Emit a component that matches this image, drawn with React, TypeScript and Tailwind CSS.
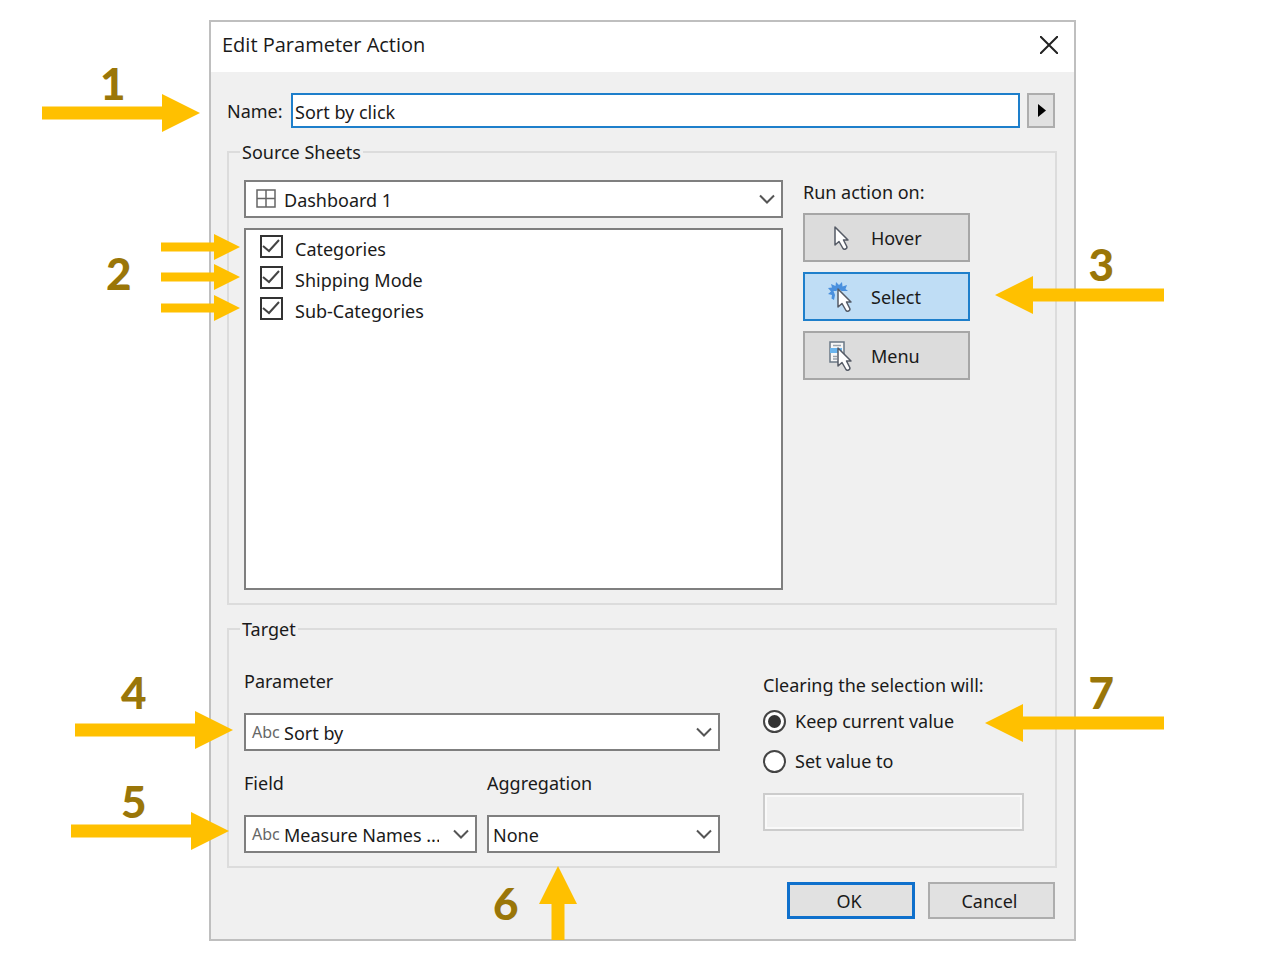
import { useState } from 'react'
import type { ReactNode } from 'react'

type Trigger = 'Hover' | 'Select' | 'Menu'

const SHEETS = ['Categories', 'Shipping Mode', 'Sub-Categories']

const CURSOR = 'M0 0v18l4-3.500 4 7c1 1.600 4.600.4 3.800-2L8.500 13H13z'

function TriggerIcon({ trigger }: { trigger: Trigger }) {
  return (
    <svg className="h-8 w-7 shrink-0" viewBox="0 0 28 32" fill="none" aria-hidden="true">
      {trigger === 'Select' && (
        <>
          <path
            d="M9 1l3 3 3-3 .5 4.500L20 4l-1.500 4 2.500 2H6.500L8 14l-1 5-2.500-1.500L5 14l-4-1 3-2.500L1 7l4-.5L4 3l4.500 2z"
            fill="#4a90de"
          />
          <path d="M8.500 11l2-2.500 3 .5 2 2-3 3h-3z" fill="#bfddf5" />
        </>
      )}
      {trigger === 'Menu' && (
        <>
          <path d="M3 2h14v20H3z" fill="#f7f7f7" stroke="#6b7885" strokeWidth="1.500" />
          <path d="M3 8h12v5H3z" fill="#6bb5ee" />
          <path d="M6 5.500h8M6 16.500h4M6 19h4" stroke="#9aa3ac" strokeWidth="1.500" />
        </>
      )}
      <path
        d={CURSOR}
        transform={trigger === 'Hover' ? 'translate(8 5)' : 'translate(11 8)'}
        fill="#fff"
        stroke="#555b66"
        strokeWidth="1.500"
        strokeLinejoin="round"
      />
    </svg>
  )
}

interface DropdownProps {
  id: string
  label?: string
  options: string[]
  icon?: ReactNode
}

function Dropdown({ id, label, options, icon }: DropdownProps) {
  return (
    <div className="relative flex h-[38px] items-center border-2 border-[#7f7f7f] bg-white">
      {icon}
      <select id={id} aria-label={label} className="h-full min-w-0 flex-1 appearance-none bg-transparent pt-0.5 pr-9 pl-1 outline-none">
        {options.map((option) => (
          <option key={option}>{option}</option>
        ))}
      </select>
      <svg className="pointer-events-none absolute right-1.5 h-4 w-4" viewBox="0 0 16 16" fill="none" stroke="#555" strokeWidth="2" aria-hidden="true">
        <path d="M1 4.500l7 7 7-7" />
      </svg>
    </div>
  )
}

function AbcIcon() {
  return <span className="w-[34px] shrink-0 pl-1.5 text-base text-[#666]">Abc</span>
}

function Group({ title, children }: { title: string; children: ReactNode }) {
  return (
    <fieldset className="mt-3 min-w-0 border-2 border-[#dcdcdc] pb-[13px] pl-[15px]">
      <legend className="-ml-1 px-0.5">{title}</legend>
      {children}
    </fieldset>
  )
}

function Arrow({ length, small = false, className }: { length: number; small?: boolean; className: string }) {
  const height = small ? 26 : 38
  const shaft = small ? 9 : 13
  const top = (height - shaft) / 2
  const neck = length - height
  return (
    <svg className={`absolute ${className}`} width={length} height={height} fill="#ffc000" aria-hidden="true">
      <path d={`M0 ${top}H${neck}V0L${length} ${height / 2}L${neck} ${height}V${top + shaft}H0z`} />
    </svg>
  )
}

function Step({ n, className }: { n: number; className: string }) {
  return (
    <span className={`absolute font-[Lato,sans-serif] text-[44px] leading-[44px] font-black text-[#9a7608] ${className}`}>
      {n}
    </span>
  )
}

function Callouts() {
  return (
    <div className="pointer-events-none absolute inset-0">
      <Step n={1} className="top-[61px] left-[100px]" />
      <Arrow length={158} className="top-[94px] left-[42px]" />
      <Step n={2} className="top-[251px] left-[106px]" />
      <Arrow small length={79} className="top-[234px] left-[161px]" />
      <Arrow small length={79} className="top-[264px] left-[161px]" />
      <Arrow small length={79} className="top-[295px] left-[161px]" />
      <Step n={3} className="top-[242px] right-[152px]" />
      <Arrow length={169} className="top-[276px] right-[102px] rotate-180" />
      <Step n={4} className="top-[670px] left-[121px]" />
      <Arrow length={158} className="top-[711px] left-[75px]" />
      <Step n={5} className="top-[779px] left-[121px]" />
      <Arrow length={158} className="top-[812px] left-[71px]" />
      <Step n={6} className="top-[881px] left-[493px]" />
      <Arrow length={74} className="top-[884px] left-[521px] -rotate-90" />
      <Step n={7} className="top-[670px] right-[152px]" />
      <Arrow length={179} className="top-[704px] right-[102px] rotate-180" />
    </div>
  )
}

export default function App() {
  const [name, setName] = useState('Sort by click')
  const [trigger, setTrigger] = useState<Trigger>('Select')
  const [clearing, setClearing] = useState('keep')

  return (
    <main className="relative min-h-screen bg-white pt-5 pr-[190px] pb-6 pl-[209px] font-['Noto_Sans',sans-serif] text-[18px] leading-6 text-[#1a1a1a]">
      <div role="dialog" aria-labelledby="dialog-title" className="border-2 border-[#bfbfbf] bg-[#f0f0f0]">
        <header className="flex h-[50px] items-center justify-between bg-white pr-[15px] pb-1 pl-[11px]">
          <h1 id="dialog-title" className="font-['Open_Sans',sans-serif] text-[20px]">Edit Parameter Action</h1>
          <button type="button" aria-label="Close" className="p-px">
            <svg className="h-[18px] w-[18px]" viewBox="0 0 18 18" stroke="#222" strokeWidth="2" aria-hidden="true">
              <path d="M0 0l18 18M18 0L0 18" />
            </svg>
          </button>
        </header>

        <form className="pt-[21px] pr-[17px] pb-5 pl-4" onSubmit={(e) => e.preventDefault()}>
          <div className="flex items-center pr-0.5">
            <label htmlFor="name" className="w-16 shrink-0">Name:</label>
            <input
              id="name"
              value={name}
              onChange={(e) => setName(e.target.value)}
              className="h-[35px] min-w-0 flex-1 border-2 border-[#1e7fcb] bg-white px-0.5 pt-0.5 outline-none"
            />
            <button type="button" aria-label="Insert" className="ml-[7px] flex h-[35px] w-7 items-center justify-center border-2 border-[#adadad] bg-[#e1e1e1]">
              <svg className="ml-0.5 h-3.5 w-2" viewBox="0 0 8 14" aria-hidden="true">
                <path d="M0 0l8 6.500-8 6.500z" />
              </svg>
            </button>
          </div>

          <Group title="Source Sheets">
            <div className="flex gap-5 pt-4">
              <div className="min-w-0 flex-1">
                <Dropdown
                  id="sheet"
                  label="Source dashboard"
                  options={['Dashboard 1']}
                  icon={
                    <svg className="mr-1 ml-2.5 h-5 w-5 shrink-0" viewBox="0 0 20 20" fill="none" stroke="#666" strokeWidth="1.500" aria-hidden="true">
                      <path d="M1 1h18v17H1zM10 1v17M1 9.500h18" />
                    </svg>
                  }
                />
                <ul className="mt-2.5 h-[362px] border-2 border-[#7f7f7f] bg-white pt-px">
                  {SHEETS.map((sheet) => (
                    <li key={sheet}>
                      <label className="flex h-[31px] items-center gap-3 pl-3.5">
                        <span className="grid shrink-0">
                          <input type="checkbox" defaultChecked className="peer col-start-1 row-start-1 h-[23px] w-[23px] appearance-none border-2 border-[#333] bg-white" />
                          <svg className="pointer-events-none invisible col-start-1 row-start-1 h-[23px] w-[23px] peer-checked:visible" viewBox="0 0 23 23" fill="none" stroke="#444" strokeWidth="2" aria-hidden="true">
                            <path d="M3 11l6 5L19 5" />
                          </svg>
                        </span>
                        <span className="pt-1">{sheet}</span>
                      </label>
                    </li>
                  ))}
                </ul>
              </div>

              <div className="flex w-[252px] flex-col items-start gap-2.5">
                <span className="-mb-px">Run action on:</span>
                {(['Hover', 'Select', 'Menu'] as const).map((item) => (
                  <button
                    key={item}
                    type="button"
                    aria-pressed={trigger === item}
                    onClick={() => setTrigger(item)}
                    className={`flex h-[49px] w-[167px] items-center gap-4 border-2 pl-[22px] ${
                      trigger === item ? 'border-[#1e7fcb] bg-[#bfddf5]' : 'border-[#a6a6a6] bg-[#dcdcdc]'
                    }`}
                  >
                    <TriggerIcon trigger={item} />
                    {item}
                  </button>
                ))}
              </div>
            </div>
          </Group>

          <Group title="Target">
            <div className="flex gap-[43px]">
              <div className="grid min-w-0 flex-1 grid-cols-2 gap-x-2.5 pt-7">
                <label htmlFor="parameter" className="col-span-2 mb-5">Parameter</label>
                <div className="col-span-2 mb-5">
                  <Dropdown id="parameter" options={['Sort by']} icon={<AbcIcon />} />
                </div>
                <label htmlFor="field" className="mb-5">Field</label>
                <label htmlFor="aggregation" className="mb-5">Aggregation</label>
                <Dropdown id="field" options={['Measure Names ...']} icon={<AbcIcon />} />
                <Dropdown id="aggregation" options={['None']} />
              </div>

              <div role="radiogroup" aria-labelledby="clearing-label" className="w-[292px] pt-8">
                <p id="clearing-label" className="mb-1">Clearing the selection will:</p>
                {[
                  { value: 'keep', text: 'Keep current value' },
                  { value: 'set', text: 'Set value to' },
                ].map(({ value, text }) => (
                  <label key={value} className="flex h-10 items-center gap-[9px]">
                    <span className="grid shrink-0 place-items-center">
                      <input
                        type="radio"
                        name="clearing"
                        checked={clearing === value}
                        onChange={() => setClearing(value)}
                        className="peer col-start-1 row-start-1 h-[23px] w-[23px] appearance-none rounded-full border-2 border-[#444] bg-white"
                      />
                      <span className="pointer-events-none invisible col-start-1 row-start-1 h-[13px] w-[13px] rounded-full bg-[#333] peer-checked:visible" />
                    </span>
                    {text}
                  </label>
                ))}
                <input
                  aria-label="Value to set"
                  disabled={clearing === 'keep'}
                  className="mt-3 h-[38px] w-[261px] border-2 border-[#cccccc] bg-[#f0f0f0] px-1 inset-ring-2 inset-ring-[#f9f9f9]"
                />
              </div>
            </div>
          </Group>

          <div className="mt-3.5 flex justify-end gap-[13px] pr-0.5">
            <button type="submit" className="h-[37px] w-32 border-3 border-[#0f70cc] bg-[#e1e1e1] pr-1">OK</button>
            <button type="button" className="h-[37px] w-[127px] border-2 border-[#adadad] bg-[#e1e1e1] pr-1">Cancel</button>
          </div>
        </form>
      </div>
      <Callouts />
    </main>
  )
}
